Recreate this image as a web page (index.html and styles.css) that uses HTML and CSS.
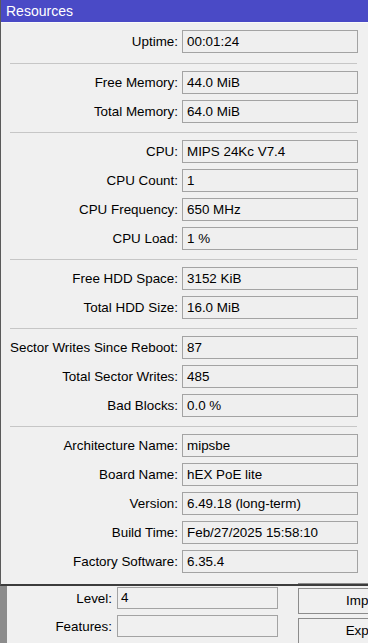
FILE: index.html
```html
<!DOCTYPE html>
<html>
<head>
<meta charset="utf-8">
<link rel="stylesheet" href="styles.css">
</head>
<body>
<div class="window">
  <div class="titlebar">Resources</div>
  <div class="body">
    <div class="group">
      <div class="row"><span class="label">Uptime:</span><span class="field">00:01:24</span></div>
    </div>
    <div class="sep first"></div>
    <div class="group">
      <div class="row"><span class="label">Free Memory:</span><span class="field">44.0 MiB</span></div>
      <div class="row"><span class="label">Total Memory:</span><span class="field">64.0 MiB</span></div>
    </div>
    <div class="sep"></div>
    <div class="group">
      <div class="row"><span class="label">CPU:</span><span class="field">MIPS 24Kc V7.4</span></div>
      <div class="row"><span class="label">CPU Count:</span><span class="field">1</span></div>
      <div class="row"><span class="label">CPU Frequency:</span><span class="field">650 MHz</span></div>
      <div class="row"><span class="label">CPU Load:</span><span class="field">1 %</span></div>
    </div>
    <div class="sep"></div>
    <div class="group">
      <div class="row"><span class="label">Free HDD Space:</span><span class="field">3152 KiB</span></div>
      <div class="row"><span class="label">Total HDD Size:</span><span class="field">16.0 MiB</span></div>
    </div>
    <div class="sep"></div>
    <div class="group">
      <div class="row"><span class="label">Sector Writes Since Reboot:</span><span class="field">87</span></div>
      <div class="row"><span class="label">Total Sector Writes:</span><span class="field">485</span></div>
      <div class="row"><span class="label">Bad Blocks:</span><span class="field">0.0 %</span></div>
    </div>
    <div class="sep"></div>
    <div class="group">
      <div class="row"><span class="label">Architecture Name:</span><span class="field">mipsbe</span></div>
      <div class="row"><span class="label">Board Name:</span><span class="field">hEX PoE lite</span></div>
      <div class="row"><span class="label">Version:</span><span class="field">6.49.18 (long-term)</span></div>
      <div class="row"><span class="label">Build Time:</span><span class="field">Feb/27/2025 15:58:10</span></div>
      <div class="row"><span class="label">Factory Software:</span><span class="field">6.35.4</span></div>
    </div>
  </div>
</div>
<div class="behind">
  <div class="strip"></div>
  <div class="behind-content">
    <div class="bgroup">
      <div class="brow"><span class="blabel">Level:</span><span class="bfield">4</span></div>
      <div class="brow"><span class="blabel">Features:</span><span class="bfield"></span></div>
    </div>
    <div class="buttons">
      <div class="btn stub"></div>
      <div class="btn">Import</div>
      <div class="btn">Export</div>
    </div>
  </div>
</div>
</body>
</html>
```

FILE: styles.css
```css
html, body {
  margin: 0;
  padding: 0;
}
body {
  width: 368px;
  height: 643px;
  overflow: hidden;
  background: #f0f0f0;
  font-family: "Liberation Sans", Arial, sans-serif;
  font-size: 13.4px;
  color: #000;
}
.window {
  width: 380px;
  border-left: 1px solid #5a5a5a;
  border-bottom: 2px solid #3c3c3c;
  background: #f0f0f0;
  box-sizing: border-box;
}
.titlebar {
  height: 22px;
  background: #4a4ac6;
  color: #fff;
  font-size: 14px;
  line-height: 22px;
  padding-left: 5px;
  border-bottom: 1px solid #fafafa;
}
.body {
  padding: 7px 0 11px 0;
}
.group {
  display: flex;
  flex-direction: column;
  gap: 6px;
}
.row {
  display: grid;
  grid-template-columns: 177px 176px;
  column-gap: 4px;
  align-items: center;
  height: 23px;
}
.label {
  text-align: right;
  white-space: nowrap;
}
.field {
  height: 23px;
  box-sizing: border-box;
  border: 1px solid #a3a3a3;
  background: #efefef;
  padding-left: 4px;
  line-height: 21px;
  white-space: nowrap;
}
.sep {
  height: 1px;
  background: #c6c6c6;
  margin: 9px 0 7px 9px;
  width: 347px;
}
.sep.first {
  margin-top: 10px;
}
.behind {
  display: flex;
  height: 57px;
}
.strip {
  width: 7px;
  background: #8c8c8c;
  flex: none;
}
.behind-content {
  flex: 1;
  display: flex;
  background: #f0f0f0;
  min-width: 0;
}
.bgroup {
  display: flex;
  flex-direction: column;
  gap: 6px;
  padding-top: 1px;
  width: 291px;
  flex: none;
}
.brow {
  display: grid;
  grid-template-columns: 105px 161px;
  column-gap: 5px;
  align-items: center;
  height: 22px;
}
.blabel {
  text-align: right;
}
.bfield {
  height: 22px;
  box-sizing: border-box;
  border: 1px solid #a3a3a3;
  padding-left: 3px;
  line-height: 20px;
}
.buttons {
  display: flex;
  flex-direction: column;
  gap: 4px;
  margin-top: -3px;
  flex: none;
}
.btn {
  width: 134px;
  height: 26px;
  box-sizing: border-box;
  border: 1px solid #8c8c8c;
  background: #f0f0f0;
  text-align: center;
  line-height: 24px;
}
.btn.stub {
  height: 7px;
  border-top: none;
}
```
